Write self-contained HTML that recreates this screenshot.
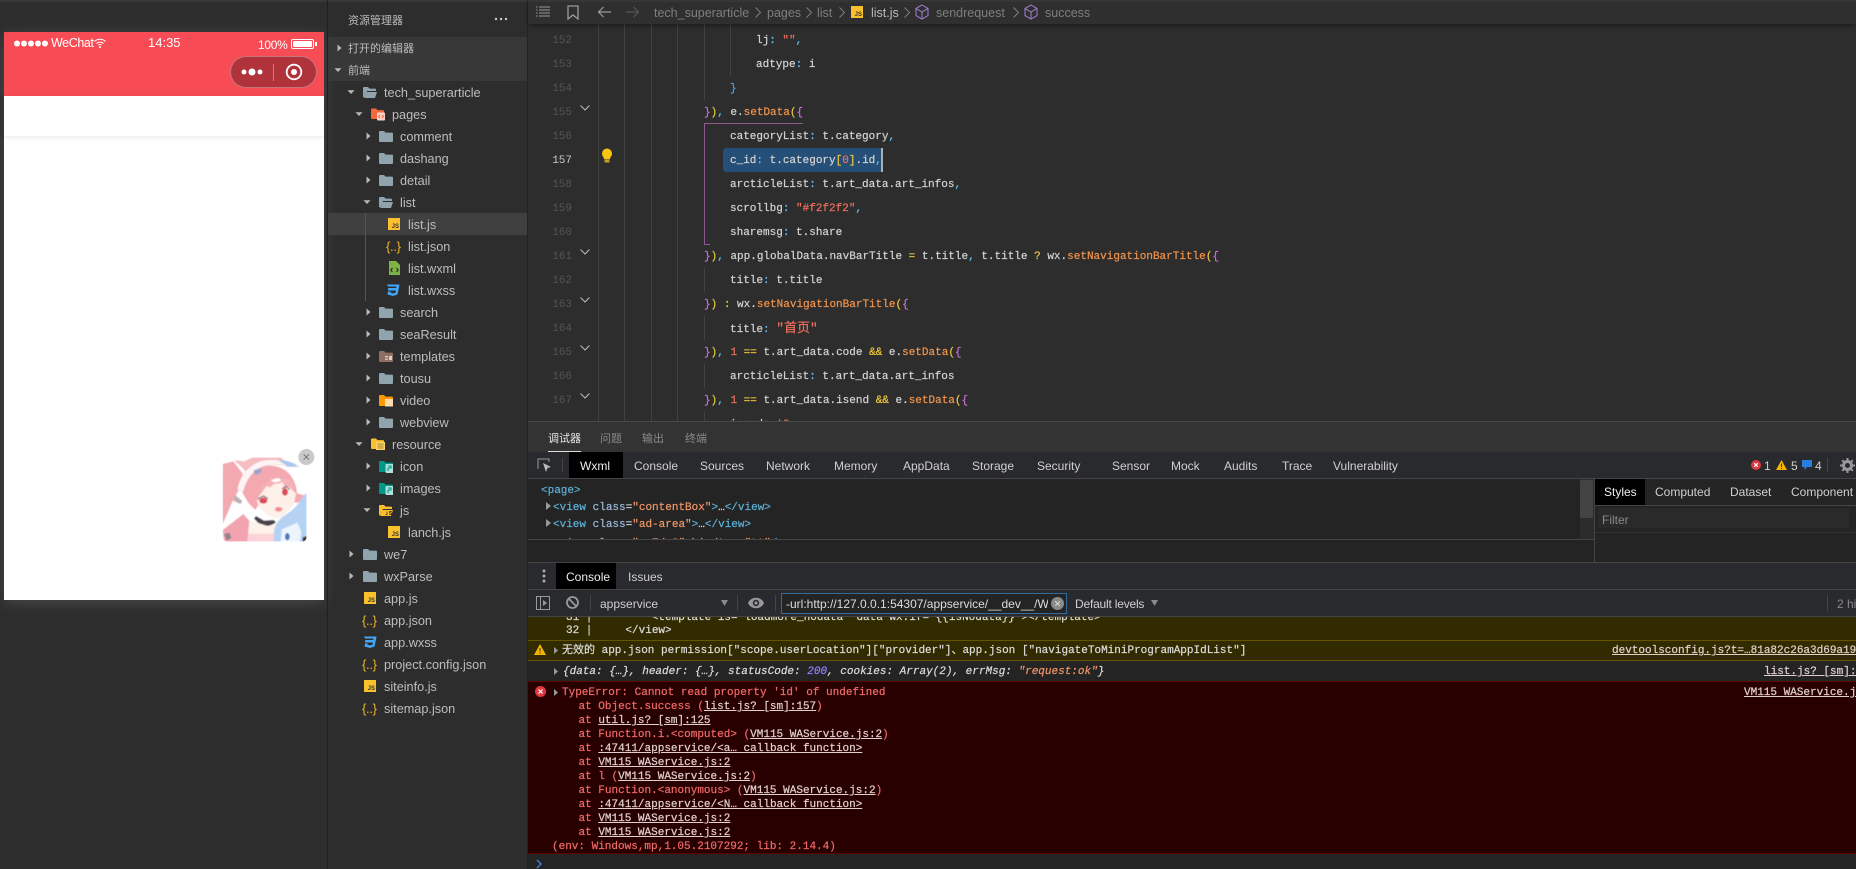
<!DOCTYPE html>
<html lang="zh"><head><meta charset="utf-8"><title>IDE</title>
<style>
html,body{margin:0;padding:0;width:1856px;height:869px;overflow:hidden;background:#2d2d2d}
body{position:relative;font-family:"Liberation Sans","Noto Sans CJK SC",sans-serif;font-size:12px;color:#ccc}
div,span.a,svg.a{position:absolute}
.s{position:absolute;height:22px;line-height:22px;font-size:12.7px;color:#bdbdbd;white-space:pre;margin-top:1px}
.ar{position:absolute;width:8px;height:8px}
.ic{position:absolute;width:14px;height:14px}
.js{position:absolute;width:12px;height:12px;background:#fbc02d;color:#333;font:bold 6px/6px "Liberation Sans",sans-serif;text-align:right;padding:0;overflow:hidden}
.js i{position:absolute;right:1px;bottom:0;font-style:normal}
.jn{position:absolute;color:#f0b429;font:13px/22px "Liberation Sans",sans-serif;letter-spacing:-.3px;white-space:pre;margin-top:1px}
.n{position:absolute;left:540px;width:32px;text-align:right;height:24px;font:11px/24px "Liberation Mono",monospace;color:#555;margin-top:1px}
.c{position:absolute;height:24px;font:11px/24px "Liberation Mono","Noto Sans CJK SC",monospace;color:#d4d4d4;white-space:pre;margin-top:1px;-webkit-text-stroke:.2px}
.g{position:absolute;width:1px;background:#424242}
.p{color:#5cc0f0}.o{color:#f0944d}.r{color:#f0705f}.y{color:#f0c93c}.m{color:#d070d8}.bl{color:#4aa5f0}
.t{position:absolute;font-size:12px;line-height:16px;white-space:pre;color:#d0d0d0;margin-top:1px}
.m2{position:absolute;font:11px/14px "Liberation Mono","Noto Sans CJK SC",monospace;white-space:pre;color:#ddd;margin-top:1px;-webkit-text-stroke:.2px}
.e{color:#f26a6a}.m2 u{color:#e2d0d0}
.tg{color:#5db0d7}.at{color:#9bbbdc}.vl{color:#f29766}
.cv{position:absolute;width:10px;height:6px}
.h{position:absolute;height:1px;background:#454545}
.sep{position:absolute;width:1px;background:#444}
.bc{position:absolute;top:7px;width:6px;height:11px}
</style></head><body>
<svg width="0" height="0" style="position:absolute"><defs>
<symbol id="rt" viewBox="0 0 8 8"><path d="M2.500 .5l4 3.500-4 3.500z" fill="#b9b9b9"/></symbol>
<symbol id="dn" viewBox="0 0 8 8"><path d="M.5 2.200h7L4 6z" fill="#b9b9b9"/></symbol>
<symbol id="fc" viewBox="0 0 14 14"><path d="M0 3a1 1 0 0 1 1-1h4l1.600 1.600H13a1 1 0 0 1 1 1V12a1 1 0 0 1-1 1H1a1 1 0 0 1-1-1z" fill="#90a4ae"/></symbol>
<symbol id="fo" viewBox="0 0 14 14"><path d="M0 3a1 1 0 0 1 1-1h4l1.600 1.600H12a1 1 0 0 1 1 1V6H4L1.500 12.500H1a1 1 0 0 1-1-1z" fill="#90a4ae"/><path d="M3.500 7H14l-2 6H1.500z" fill="#90a4ae"/></symbol>
<symbol id="cube" viewBox="0 0 14 16"><path d="M7 1l6 3.400v7.200L7 15l-6-3.400V4.400zM1 4.400L7 8l6-3.600M7 8v7" fill="none" stroke="#a07fd0" stroke-width="1"/></symbol>
<symbol id="css" viewBox="0 0 14 14"><path d="M1 1.500h12.500l-.5 3-1.500 7L7 13 1.500 11.500l.5-3h2.800l-.2 1.200 2.400.7 2.500-.7.400-2.200H1.800l.5-2.500h7.900l.3-1.500H2z" fill="#42a5f5"/></symbol>
<symbol id="chev" viewBox="0 0 6 11"><path d="M.5 .5l5 5-5 5" fill="none" stroke="#7e7e7e"/></symbol>
</defs></svg>

<!-- top strip -->
<div style="left:0;top:0;width:1856px;height:2px;background:#383838"></div>

<!-- phone -->
<div style="left:4px;top:32px;width:320px;height:568px;background:#fff;box-shadow:0 3px 14px rgba(255,255,255,.13)"></div>
<div style="left:4px;top:32px;width:320px;height:64px;background:#f74c55"></div>
<div style="left:4px;top:96px;width:320px;height:40px;background:#fff;box-shadow:0 1px 5px rgba(0,0,0,.1)"></div>
<svg class="a" style="left:14px;top:38px" width="36" height="10"><g fill="#fff"><circle cx="3" cy="5.500" r="3"/><circle cx="10" cy="5.500" r="3"/><circle cx="17" cy="5.500" r="3"/><circle cx="24" cy="5.500" r="3"/><circle cx="31" cy="5.500" r="3"/></g></svg>
<div class="t" style="left:51px;top:34px;color:#fff;font-size:12.5px;letter-spacing:-.4px">WeChat</div>
<svg class="a" style="left:94px;top:38px" width="12" height="10" viewBox="0 0 12 10"><path d="M.5 3.500a8 8 0 0 1 11 0M2.500 5.500a5 5 0 0 1 7 0M4.300 7.200a2.500 2.500 0 0 1 3.400 0" fill="none" stroke="#fff" stroke-width="1"/><circle cx="6" cy="9" r="1" fill="#fff"/></svg>
<div class="t" style="left:148px;top:34px;color:#fff;font-size:13px">14:35</div>
<div class="t" style="left:258px;top:36px;color:#fff;font-size:12px;letter-spacing:-.3px">100%</div>
<div style="left:291px;top:39px;width:21px;height:8px;border:1px solid #fff;border-radius:2px"></div>
<div style="left:293px;top:41px;width:19px;height:6px;background:#fff;border-radius:1px"></div>
<div style="left:315px;top:42px;width:2px;height:4px;background:#fff"></div>
<div style="left:230px;top:56px;width:85px;height:30px;border:1px solid rgba(255,255,255,.32);border-radius:16px;background:#b0333c"></div>
<svg class="a" style="left:240px;top:66px" width="24" height="12"><g fill="#fff"><circle cx="4" cy="6" r="2.500"/><circle cx="12" cy="6" r="3.500"/><circle cx="20" cy="6" r="2.500"/></g></svg>
<div style="left:273px;top:64px;width:1px;height:17px;background:rgba(255,255,255,.35)"></div>
<svg class="a" style="left:285px;top:63px" width="18" height="18"><circle cx="9" cy="9" r="7.300" fill="none" stroke="#fff" stroke-width="1.800"/><circle cx="9" cy="9" r="3" fill="#fff"/></svg>

<!-- floating image -->
<svg class="a" style="left:200px;top:430px" width="130" height="130" viewBox="0 0 390 390">
<defs><clipPath id="ck"><rect x="68" y="82" width="252" height="253" rx="14"/></clipPath><filter id="bl" x="-5%" y="-5%" width="110%" height="110%"><feGaussianBlur stdDeviation="1.500"/></filter></defs>
<g clip-path="url(#ck)" filter="url(#bl)">
<rect x="68" y="82" width="252" height="253" fill="#fff"/>
<!-- ponytail -->
<path d="M68 102l32-8 28 36-8 44-14 24 10 22-18-8-12 30-18 40z" fill="#f2a9b0"/>
<path d="M105 195l22 18-6 10-18-14z" fill="#b8b0b4"/>
<!-- hat top -->
<path d="M102 90l30 4 26-12h84l18 16-60 2-56 30z" fill="#f6bcc1"/>
<!-- hair mass -->
<path d="M128 190c0-55 45-90 95-82 42 6 66 42 68 82l29 8v12l-28 8-10 0-22-26-70 10-24 38-20-20z" fill="#f4a9b1"/>
<!-- visor -->
<path d="M112 178c6-36 30-68 62-82 34-12 80-8 122 14l-32 0c-30-10-62-10-88 6-24 14-38 38-46 68z" fill="#fff4f5" stroke="#e8b0b8" stroke-width="1"/>
<path d="M234 90c22 0 46 6 62 20l-32 0z" fill="#a8c8ec"/>
<path d="M160 122l22-8 4 12-20 10z" fill="#9ea2c8"/>
<!-- face -->
<path d="M170 208l30-40 50-12 38 34-6 34-34 36-22 6-30-16-22-26z" fill="#fdf0e9"/>
<!-- bangs -->
<path d="M186 170l40-28 44 8 16 32-14-6-8-20-8 26-8-26-20-2-16 18-14-4-14 18z" fill="#f6b3ba"/>
<path d="M212 150l24-6 8 8-20 6z" fill="#fff"/>
<ellipse cx="190" cy="212" rx="12" ry="9" fill="#d94e5c"/>
<ellipse cx="255" cy="186" rx="9" ry="11" fill="#d94e5c"/>
<path d="M172 208l18-10 14 8M246 176l14-7 8 10" stroke="#70404a" stroke-width="3" fill="none"/>
<ellipse cx="236" cy="238" rx="11" ry="7" fill="#ee8f90"/>
<!-- choker -->
<path d="M168 258l24 14 30-2 6 8-20 10-26-2-20-20z" fill="#4a4348"/>
<!-- chest -->
<path d="M140 272l26 4 36 12 24-6-4 53h-88z" fill="#fdf1ea"/>
<path d="M140 312h86v23h-86z" fill="#fbd3d8"/>
<!-- hoodie -->
<path d="M68 300l62-48 18 20-6 63H72z" fill="#f2a3b0"/>
<path d="M72 312l16-4 6 16-14 8z" fill="#8f8488"/>
<!-- blue hair -->
<path d="M222 335c-4-40 6-62 34-80 18-12 36-26 44-44l20-24v148z" fill="#b5d2f4"/>
<path d="M246 298l46-20 12 28-4 29h-58z" fill="#eef4fc"/>
<ellipse cx="262" cy="320" rx="7" ry="11" fill="#4a77c2"/>
<path d="M308 322l12-4v17h-12z" fill="#3a3a3a"/>
</g>
<circle cx="319" cy="81" r="24" fill="#c9c9c9"/><path d="M311 73l16 16M327 73l-16 16" stroke="#6a6a6a" stroke-width="2.500"/>
</svg>

<!-- sidebar -->
<div style="left:327px;top:0;width:1px;height:869px;background:#1f1f1f"></div>
<div style="left:328px;top:37px;width:199px;height:44px;background:#383838"></div>
<div style="left:328px;top:213px;width:199px;height:22px;background:#404040"></div>
<div style="left:527px;top:0;width:1px;height:869px;background:#232323"></div>
<div class="s" style="left:348px;top:9px;font-size:11px;color:#bbb">资源管理器</div>
<svg class="a" style="left:494px;top:17px" width="14" height="4"><g fill="#ccc"><circle cx="2" cy="2" r="1.200"/><circle cx="7" cy="2" r="1.200"/><circle cx="12" cy="2" r="1.200"/></g></svg>
<div class="s" style="left:348px;top:37px;font-size:11px">打开的编辑器</div>
<div class="s" style="left:348px;top:59px;font-size:11px">前端</div>
<svg class="ar" style="left:335px;top:44px"><use href="#rt"/></svg>
<svg class="ar" style="left:334px;top:66px"><use href="#dn"/></svg>
<div class="g" style="left:365px;top:213px;height:88px;background:#555"></div>

<svg class="ar" style="left:347px;top:88px"><use href="#dn"/></svg><svg class="ic" style="left:363px;top:85px"><use href="#fo"/></svg><div class="s" style="left:384px;top:81px">tech_superarticle</div>
<svg class="ar" style="left:355px;top:110px"><use href="#dn"/></svg>
<svg class="ic" style="left:371px;top:107px" viewBox="0 0 14 14"><path d="M0 2.500a1 1 0 0 1 1-1h4l1.600 1.600H12a1 1 0 0 1 1 1V11a1 1 0 0 1-1 1H1a1 1 0 0 1-1-1z" fill="#f4683c"/><rect x="6" y="5.500" width="8" height="8" rx="1" fill="#fbd3c5"/><path d="M9 8l-1.500 1.500L9 11M11 8l1.500 1.500L11 11" stroke="#f4683c" fill="none"/></svg>
<div class="s" style="left:392px;top:103px">pages</div>
<svg class="ar" style="left:364px;top:132px"><use href="#rt"/></svg><svg class="ic" style="left:379px;top:129px"><use href="#fc"/></svg><div class="s" style="left:400px;top:125px">comment</div>
<svg class="ar" style="left:364px;top:154px"><use href="#rt"/></svg><svg class="ic" style="left:379px;top:151px"><use href="#fc"/></svg><div class="s" style="left:400px;top:147px">dashang</div>
<svg class="ar" style="left:364px;top:176px"><use href="#rt"/></svg><svg class="ic" style="left:379px;top:173px"><use href="#fc"/></svg><div class="s" style="left:400px;top:169px">detail</div>
<svg class="ar" style="left:363px;top:198px"><use href="#dn"/></svg><svg class="ic" style="left:379px;top:195px"><use href="#fo"/></svg><div class="s" style="left:400px;top:191px">list</div>

<div class="js" style="left:388px;top:218px"><i>JS</i></div><div class="s" style="left:408px;top:213px">list.js</div>
<div class="jn" style="left:386px;top:235px">{..}</div><div class="s" style="left:408px;top:235px">list.json</div>
<svg class="ic" style="left:387px;top:261px" viewBox="0 0 14 14"><path d="M2 0h7l4 4v10H2z" fill="#7cb342"/><path d="M5.500 7L3.800 9l1.700 2M9.500 7l1.700 2-1.700 2" stroke="#2d2d2d" fill="none" stroke-width="1.200"/></svg><div class="s" style="left:408px;top:257px">list.wxml</div>
<svg class="ic" style="left:386px;top:283px"><use href="#css"/></svg><div class="s" style="left:408px;top:279px">list.wxss</div>

<svg class="ar" style="left:364px;top:308px"><use href="#rt"/></svg><svg class="ic" style="left:379px;top:305px"><use href="#fc"/></svg><div class="s" style="left:400px;top:301px">search</div>
<svg class="ar" style="left:364px;top:330px"><use href="#rt"/></svg><svg class="ic" style="left:379px;top:327px"><use href="#fc"/></svg><div class="s" style="left:400px;top:323px">seaResult</div>
<svg class="ar" style="left:364px;top:352px"><use href="#rt"/></svg>
<svg class="ic" style="left:379px;top:349px" viewBox="0 0 14 14"><path d="M0 3a1 1 0 0 1 1-1h4l1.600 1.600H13a1 1 0 0 1 1 1V12a1 1 0 0 1-1 1H1a1 1 0 0 1-1-1z" fill="#8d6e63"/><path d="M6 7h3v1.200H6zM6 9.500h3v1.200H6zM10 7h3v4h-3z" fill="#e0d0c8"/></svg>
<div class="s" style="left:400px;top:345px">templates</div>
<svg class="ar" style="left:364px;top:374px"><use href="#rt"/></svg><svg class="ic" style="left:379px;top:371px"><use href="#fc"/></svg><div class="s" style="left:400px;top:367px">tousu</div>
<svg class="ar" style="left:364px;top:396px"><use href="#rt"/></svg>
<svg class="ic" style="left:379px;top:393px" viewBox="0 0 14 14"><path d="M0 3a1 1 0 0 1 1-1h4l1.600 1.600H13a1 1 0 0 1 1 1V12a1 1 0 0 1-1 1H1a1 1 0 0 1-1-1z" fill="#ff9800"/><rect x="6" y="6" width="8.500" height="7.500" fill="#fbdcae"/></svg>
<div class="s" style="left:400px;top:389px">video</div>
<svg class="ar" style="left:364px;top:418px"><use href="#rt"/></svg><svg class="ic" style="left:379px;top:415px"><use href="#fc"/></svg><div class="s" style="left:400px;top:411px">webview</div>
<svg class="ar" style="left:355px;top:440px"><use href="#dn"/></svg>
<svg class="ic" style="left:371px;top:437px" viewBox="0 0 14 14"><path d="M0 2.500a1 1 0 0 1 1-1h4l1.600 1.600H12a1 1 0 0 1 1 1V11a1 1 0 0 1-1 1H1a1 1 0 0 1-1-1z" fill="#fbc02d"/><rect x="5" y="5" width="9" height="8" fill="#fbd56a"/><path d="M6.500 7h6M6.500 9h6M6.500 11h6" stroke="#a5862a"/></svg>
<div class="s" style="left:392px;top:433px">resource</div>
<svg class="ar" style="left:364px;top:462px"><use href="#rt"/></svg>
<svg class="ic" style="left:379px;top:459px" viewBox="0 0 14 14"><path d="M0 3a1 1 0 0 1 1-1h4l1.600 1.600H13a1 1 0 0 1 1 1V12a1 1 0 0 1-1 1H1a1 1 0 0 1-1-1z" fill="#009688"/><rect x="6.500" y="5" width="8" height="9" rx="1" fill="#b2dfdb"/><path d="M9 7h3v2h-3v3" stroke="#009688" fill="none"/></svg>
<div class="s" style="left:400px;top:455px">icon</div>
<svg class="ar" style="left:364px;top:484px"><use href="#rt"/></svg>
<svg class="ic" style="left:379px;top:481px" viewBox="0 0 14 14"><path d="M0 3a1 1 0 0 1 1-1h4l1.600 1.600H13a1 1 0 0 1 1 1V12a1 1 0 0 1-1 1H1a1 1 0 0 1-1-1z" fill="#009688"/><rect x="6.500" y="5" width="8" height="9" rx="1" fill="#b2dfdb"/><path d="M9 7h3v2h-3v3" stroke="#009688" fill="none"/></svg>
<div class="s" style="left:400px;top:477px">images</div>
<svg class="ar" style="left:363px;top:506px"><use href="#dn"/></svg>
<svg class="ic" style="left:379px;top:503px" viewBox="0 0 14 14"><path d="M0 3a1 1 0 0 1 1-1h4l1.600 1.600H12a1 1 0 0 1 1 1V6H4l-2.500 6.500H1a1 1 0 0 1-1-1z" fill="#fbc02d"/><path d="M3.500 7H14l-2 6H1.500z" fill="#fbc02d"/><path d="M8 8.500v3l-1.500.5M13 8.500h-2.500v1.500h2v1.500h-2.500" stroke="#333" fill="none" stroke-width=".8"/></svg>
<div class="s" style="left:400px;top:499px">js</div>
<div class="js" style="left:388px;top:526px"><i>JS</i></div><div class="s" style="left:408px;top:521px">lanch.js</div>
<svg class="ar" style="left:347px;top:550px"><use href="#rt"/></svg><svg class="ic" style="left:363px;top:547px"><use href="#fc"/></svg><div class="s" style="left:384px;top:543px">we7</div>
<svg class="ar" style="left:347px;top:572px"><use href="#rt"/></svg><svg class="ic" style="left:363px;top:569px"><use href="#fc"/></svg><div class="s" style="left:384px;top:565px">wxParse</div>
<div class="js" style="left:364px;top:592px"><i>JS</i></div><div class="s" style="left:384px;top:587px">app.js</div>
<div class="jn" style="left:362px;top:609px">{..}</div><div class="s" style="left:384px;top:609px">app.json</div>
<svg class="ic" style="left:363px;top:635px"><use href="#css"/></svg><div class="s" style="left:384px;top:631px">app.wxss</div>
<div class="jn" style="left:362px;top:653px">{..}</div><div class="s" style="left:384px;top:653px">project.config.json</div>
<div class="js" style="left:364px;top:680px"><i>JS</i></div><div class="s" style="left:384px;top:675px">siteinfo.js</div>
<div class="jn" style="left:362px;top:697px">{..}</div><div class="s" style="left:384px;top:697px">sitemap.json</div>

<!-- breadcrumb -->
<div style="left:528px;top:2px;width:1328px;height:22px;background:#2f2f2f;box-shadow:0 2px 4px rgba(0,0,0,.35);z-index:3"></div>
<div style="left:528px;top:0;width:1328px;height:24px;z-index:4">
<svg class="a" style="left:8px;top:6px" width="14" height="12"><path d="M0 1h1.500M3 1h11M0 4h1.500M3 4h11M0 7h1.500M3 7h11M0 10h1.500M3 10h11" stroke="#9a9a9a"/></svg>
<svg class="a" style="left:39px;top:5px" width="12" height="15"><path d="M1 1h10v13L6 10l-5 4z" fill="none" stroke="#9a9a9a" stroke-width="1.300"/></svg>
<svg class="a" style="left:69px;top:6px" width="14" height="12"><path d="M14 6H1.500M6.500 1L1.500 6l5 5" fill="none" stroke="#9a9a9a" stroke-width="1.200"/></svg>
<svg class="a" style="left:98px;top:6px" width="14" height="12"><path d="M0 6h12.500M7.500 1l5 5-5 5" fill="none" stroke="#555" stroke-width="1.200"/></svg>
<div class="t" style="left:126px;top:4px;font-size:12.500px;color:#7e7e7e">tech_superarticle</div>
<svg class="bc" style="left:227px"><use href="#chev"/></svg>
<div class="t" style="left:239px;top:4px;font-size:12.500px;color:#7e7e7e">pages</div>
<svg class="bc" style="left:278px"><use href="#chev"/></svg>
<div class="t" style="left:289px;top:4px;font-size:12.500px;color:#7e7e7e">list</div>
<svg class="bc" style="left:311px"><use href="#chev"/></svg>
<div class="js" style="left:323px;top:6px"><i>JS</i></div>
<div class="t" style="left:343px;top:4px;font-size:12.500px;color:#bbb">list.js</div>
<svg class="bc" style="left:376px"><use href="#chev"/></svg>
<svg class="a" style="left:387px;top:4px" width="14" height="16"><use href="#cube"/></svg>
<div class="t" style="left:408px;top:4px;font-size:12.500px;color:#7e7e7e">sendrequest</div>
<svg class="bc" style="left:485px"><use href="#chev"/></svg>
<svg class="a" style="left:496px;top:4px" width="14" height="16"><use href="#cube"/></svg>
<div class="t" style="left:517px;top:4px;font-size:12.500px;color:#7e7e7e">success</div>
</div>

<!-- indent guides -->
<div class="g" style="left:598px;top:24px;height:398px"></div>
<div class="g" style="left:624px;top:24px;height:398px"></div>
<div class="g" style="left:651px;top:24px;height:398px"></div>
<div class="g" style="left:677px;top:24px;height:398px"></div>
<div class="g" style="left:704px;top:24px;height:76px"></div>
<div class="g" style="left:730px;top:24px;height:52px"></div>
<div class="g" style="left:704px;top:268px;height:24px"></div>
<div class="g" style="left:704px;top:316px;height:24px"></div>
<div class="g" style="left:704px;top:364px;height:24px"></div>
<div class="g" style="left:704px;top:412px;height:10px"></div>
<div style="left:704px;top:123px;width:1px;height:121px;background:#8a5a90"></div>
<div style="left:704px;top:123px;width:99px;height:1px;background:#8a5a90"></div>
<div style="left:704px;top:244px;width:6px;height:1px;background:#8a5a90"></div>

<!-- line numbers -->
<div class="n" style="top:28px">152</div><div class="n" style="top:52px">153</div><div class="n" style="top:76px">154</div><div class="n" style="top:100px">155</div><div class="n" style="top:124px">156</div><div class="n" style="top:148px;color:#c8c8c8">157</div><div class="n" style="top:172px">158</div><div class="n" style="top:196px">159</div><div class="n" style="top:220px">160</div><div class="n" style="top:244px">161</div><div class="n" style="top:268px">162</div><div class="n" style="top:292px">163</div><div class="n" style="top:316px">164</div><div class="n" style="top:340px">165</div><div class="n" style="top:364px">166</div><div class="n" style="top:388px">167</div>
<svg class="cv" style="left:580px;top:105px"><path d="M.5 .5L5 5l4.500-4.500" fill="none" stroke="#bbb"/></svg>
<svg class="cv" style="left:580px;top:249px"><path d="M.5 .5L5 5l4.500-4.500" fill="none" stroke="#bbb"/></svg>
<svg class="cv" style="left:580px;top:297px"><path d="M.5 .5L5 5l4.500-4.500" fill="none" stroke="#bbb"/></svg>
<svg class="cv" style="left:580px;top:345px"><path d="M.5 .5L5 5l4.500-4.500" fill="none" stroke="#bbb"/></svg>
<svg class="cv" style="left:580px;top:393px"><path d="M.5 .5L5 5l4.500-4.500" fill="none" stroke="#bbb"/></svg>
<svg class="a" style="left:601px;top:148px" width="12" height="15" viewBox="0 0 12 15"><path d="M6 .5a5 5 0 0 1 5 5c0 2.500-2 4-2.300 6H3.300C3 9.500 1 8 1 5.500a5 5 0 0 1 5-5z" fill="#f9c513"/><path d="M3.600 12h4.800v2.500H3.600z" fill="#c9a21f"/></svg>

<!-- selection -->
<div style="left:723px;top:148px;width:158px;height:24px;background:#264f78;border-radius:3px 0 0 3px"></div>
<div style="left:881px;top:148px;width:2px;height:24px;background:#aeafad"></div>

<!-- code -->
<div class="c" style="left:756px;top:28px">lj<span class="p">:</span> <span class="r">""</span><span class="p">,</span></div>
<div class="c" style="left:756px;top:52px">adtype<span class="p">:</span> i</div>
<div class="c" style="left:730px;top:76px"><span class="bl">}</span></div>
<div class="c" style="left:704px;top:100px"><span class="m">}</span><span class="y">)</span><span class="p">,</span> e.<span class="o">setData</span><span class="y">(</span><span class="m">{</span></div>
<div class="c" style="left:730px;top:124px">categoryList<span class="p">:</span> t.category<span class="p">,</span></div>
<div class="c" style="left:730px;top:148px">c_id<span class="p">:</span> t.category<span class="y">[</span><span class="r">0</span><span class="y">]</span>.id<span class="p">,</span></div>
<div class="c" style="left:730px;top:172px">arcticleList<span class="p">:</span> t.art_data.art_infos<span class="p">,</span></div>
<div class="c" style="left:730px;top:196px">scrollbg<span class="p">:</span> <span class="r">"#f2f2f2"</span><span class="p">,</span></div>
<div class="c" style="left:730px;top:220px">sharemsg<span class="p">:</span> t.share</div>
<div class="c" style="left:704px;top:244px"><span class="m">}</span><span class="y">)</span><span class="p">,</span> app.globalData.navBarTitle <span class="y">=</span> t.title<span class="p">,</span> t.title <span class="y">?</span> wx.<span class="o">setNavigationBarTitle</span><span class="y">(</span><span class="m">{</span></div>
<div class="c" style="left:730px;top:268px">title<span class="p">:</span> t.title</div>
<div class="c" style="left:704px;top:292px"><span class="m">}</span><span class="y">)</span> <span class="y">:</span> wx.<span class="o">setNavigationBarTitle</span><span class="y">(</span><span class="m">{</span></div>
<div class="c" style="left:730px;top:316px">title<span class="p">:</span> <span class="r" style="font-size:13px">"首页"</span></div>
<div class="c" style="left:704px;top:340px"><span class="m">}</span><span class="y">)</span><span class="p">,</span> <span class="r">1</span> <span class="y">==</span> t.art_data.code <span class="y">&amp;&amp;</span> e.<span class="o">setData</span><span class="y">(</span><span class="m">{</span></div>
<div class="c" style="left:730px;top:364px">arcticleList<span class="p">:</span> t.art_data.art_infos</div>
<div class="c" style="left:704px;top:388px"><span class="m">}</span><span class="y">)</span><span class="p">,</span> <span class="r">1</span> <span class="y">==</span> t.art_data.isend <span class="y">&amp;&amp;</span> e.<span class="o">setData</span><span class="y">(</span><span class="m">{</span></div>
<div class="c" style="left:730px;top:412px">isend<span class="p">:</span> <span class="r">!0</span></div>

<!-- panel -->
<div style="left:528px;top:421px;width:1328px;height:448px;background:#333;border-top:1px solid #4a4a4a;box-sizing:border-box"></div>
<div class="t" style="left:548px;top:430px;color:#e8e8e8;font-size:11px">调试器</div>
<div class="t" style="left:600px;top:430px;color:#8a8a8a;font-size:11px">问题</div>
<div class="t" style="left:642px;top:430px;color:#8a8a8a;font-size:11px">输出</div>
<div class="t" style="left:685px;top:430px;color:#8a8a8a;font-size:11px">终端</div>
<div style="left:548px;top:451px;width:33px;height:1px;background:#ddd"></div>

<!-- devtools tabs -->
<div style="left:528px;top:452px;width:1328px;height:26px;background:#292a2d"></div>
<div class="h" style="left:528px;top:478px;width:1328px"></div>
<svg class="a" style="left:537px;top:458px" width="16" height="16"><path d="M1 11V1h11v3" fill="none" stroke="#999"/><path d="M6 5l8 4-3.500 1L9 14z" fill="#bbb"/></svg>
<div class="sep" style="left:562px;top:458px;height:14px"></div>
<div style="left:569px;top:452px;width:54px;height:26px;background:#000"></div>
<div class="t" style="left:580px;top:457px;color:#eee">Wxml</div>
<div class="t" style="left:634px;top:457px">Console</div>
<div class="t" style="left:700px;top:457px">Sources</div>
<div class="t" style="left:766px;top:457px">Network</div>
<div class="t" style="left:834px;top:457px">Memory</div>
<div class="t" style="left:903px;top:457px">AppData</div>
<div class="t" style="left:972px;top:457px">Storage</div>
<div class="t" style="left:1037px;top:457px">Security</div>
<div class="t" style="left:1112px;top:457px">Sensor</div>
<div class="t" style="left:1171px;top:457px">Mock</div>
<div class="t" style="left:1224px;top:457px">Audits</div>
<div class="t" style="left:1282px;top:457px">Trace</div>
<div class="t" style="left:1333px;top:457px">Vulnerability</div>
<svg class="a" style="left:1751px;top:460px" width="10" height="10"><circle cx="5" cy="5" r="5" fill="#e0383e"/><path d="M3.200 3.200l3.600 3.600M6.800 3.200L3.200 6.800" stroke="#fff" stroke-width="1.200"/></svg>
<div class="t" style="left:1764px;top:457px">1</div>
<svg class="a" style="left:1776px;top:460px" width="11" height="10"><path d="M5.500 0L11 10H0z" fill="#f4b400"/><path d="M5.500 3.500v3.500M5.500 8v1" stroke="#333"/></svg>
<div class="t" style="left:1791px;top:457px">5</div>
<svg class="a" style="left:1802px;top:460px" width="10" height="10"><path d="M0 0h10v7H5L2.500 10V7H0z" fill="#2a7de1"/></svg>
<div class="t" style="left:1815px;top:457px">4</div>
<div class="sep" style="left:1827px;top:458px;height:14px"></div>
<svg class="a" style="left:1840px;top:458px" width="15" height="15" viewBox="0 0 15 15"><circle cx="7.500" cy="7.500" r="4" fill="none" stroke="#9a9a9a" stroke-width="3"/><path d="M7.500 0v3M7.500 12v3M0 7.500h3M12 7.500h3M2.200 2.200l2 2M10.800 10.800l2 2M12.800 2.200l-2 2M4.200 10.800l-2 2" stroke="#9a9a9a" stroke-width="2"/></svg>

<!-- elements -->
<div style="left:528px;top:479px;width:1066px;height:83px;background:#242424"></div>
<div style="left:528px;top:479px;width:1066px;height:60px;overflow:hidden">
<div class="m2" style="left:13px;top:4px"><span class="tg">&lt;page&gt;</span></div>
<div class="m2" style="left:25px;top:21px"><span class="tg">&lt;view</span> <span class="at">class</span>=<span class="vl">"contentBox"</span><span class="tg">&gt;</span>…<span class="tg">&lt;/view&gt;</span></div>
<div class="m2" style="left:25px;top:38px"><span class="tg">&lt;view</span> <span class="at">class</span>=<span class="vl">"ad-area"</span><span class="tg">&gt;</span>…<span class="tg">&lt;/view&gt;</span></div>
<div class="m2" style="left:25px;top:57px"><span class="tg">&lt;view</span> <span class="at">class</span>=<span class="vl">"a-7de8"</span> <span class="at">bindtap</span>=<span class="vl">"tt"</span><span class="tg">/&gt;</span></div>
<svg class="ar" style="left:18px;top:22px;width:6px;height:10px" viewBox="0 0 6 10"><path d="M0 1l5 4-5 4z" fill="#9a9a9a"/></svg>
<svg class="ar" style="left:18px;top:39px;width:6px;height:10px" viewBox="0 0 6 10"><path d="M0 1l5 4-5 4z" fill="#9a9a9a"/></svg>
</div>
<div style="left:1580px;top:479px;width:14px;height:60px;background:#2c2c2c"></div>
<div style="left:1580px;top:480px;width:13px;height:38px;background:#444;border-radius:2px"></div>
<div class="h" style="left:528px;top:539px;width:1066px"></div>
<div class="h" style="left:528px;top:562px;width:1328px"></div>
<div class="sep" style="left:1594px;top:479px;height:84px"></div>
<div style="left:1595px;top:479px;width:261px;height:83px;background:#242424"></div>
<div style="left:1595px;top:479px;width:50px;height:26px;background:#000"></div>
<div class="t" style="left:1604px;top:483px;color:#eee">Styles</div>
<div class="t" style="left:1655px;top:483px">Computed</div>
<div class="t" style="left:1730px;top:483px">Dataset</div>
<div class="t" style="left:1791px;top:483px">Component</div>
<div class="h" style="left:1595px;top:505px;width:261px"></div>
<div style="left:1598px;top:508px;width:251px;height:20px;background:#2a2a2a"></div>
<div class="t" style="left:1602px;top:511px;color:#8a8a8a">Filter</div>
<div class="h" style="left:1595px;top:532px;width:261px;background:#333"></div>

<!-- console drawer -->
<div style="left:528px;top:563px;width:1328px;height:26px;background:#292a2d"></div>
<div class="h" style="left:528px;top:589px;width:1328px"></div>
<svg class="a" style="left:542px;top:569px" width="4" height="14"><g fill="#aaa"><circle cx="2" cy="2" r="1.500"/><circle cx="2" cy="7" r="1.500"/><circle cx="2" cy="12" r="1.500"/></g></svg>
<div style="left:556px;top:563px;width:60px;height:26px;background:#000"></div>
<div class="t" style="left:566px;top:568px;color:#eee">Console</div>
<div class="t" style="left:628px;top:568px">Issues</div>

<!-- messages first so toolbar clips -->
<div style="left:528px;top:617px;width:1328px;height:23px;background:#332b00"></div>
<div class="m2" style="left:566px;top:610px">31 |         &lt;template is="loadmore_nodata" data wx:if="{{isNodata}}"&gt;&lt;/template&gt;</div>
<div class="m2" style="left:566px;top:623px">32 |     &lt;/view&gt;</div>
<div style="left:528px;top:640px;width:1328px;height:1px;background:#665500"></div>
<div style="left:528px;top:641px;width:1328px;height:19px;background:#332b00"></div>
<div style="left:528px;top:660px;width:1328px;height:1px;background:#665500"></div>
<svg class="a" style="left:534px;top:644px" width="12" height="11"><path d="M6 0l6 11H0z" fill="#f4b400"/><path d="M6 4v3.500M6 8.500v1.200" stroke="#333"/></svg>
<svg class="a" style="left:554px;top:646px" width="6" height="9"><path d="M0 1l4 3.500L0 8z" fill="#9a9a9a"/></svg>
<div class="m2" style="left:562px;top:643px">无效的 app.json permission["scope.userLocation"]["provider"]、app.json ["navigateToMiniProgramAppIdList"]</div>
<div class="m2" style="left:1612px;top:643px"><u>devtoolsconfig.js?t=…81a82c26a3d69a19</u></div>
<div style="left:528px;top:661px;width:1328px;height:20px;background:#242424"></div>
<svg class="a" style="left:554px;top:667px" width="6" height="9"><path d="M0 1l4 3.500L0 8z" fill="#9a9a9a"/></svg>
<div class="m2" style="left:563px;top:664px;font-style:italic">{data: {…}, header: {…}, statusCode: <span style="color:#9980ff">200</span>, cookies: Array(2), errMsg: <span class="vl">"request:ok"</span>}</div>
<div class="m2" style="left:1764px;top:664px"><u>list.js? [sm]:157</u></div>
<div style="left:528px;top:681px;width:1328px;height:173px;background:#290000;border-top:1px solid #5c0000;border-bottom:1px solid #5c0000;box-sizing:border-box"></div>
<svg class="a" style="left:535px;top:686px" width="11" height="11"><circle cx="5.500" cy="5.500" r="5.500" fill="#e0383e"/><path d="M3.500 3.500l4 4M7.500 3.500l-4 4" stroke="#fff" stroke-width="1.200"/></svg>
<svg class="a" style="left:554px;top:688px" width="6" height="9"><path d="M0 1l4 3.500L0 8z" fill="#9a9a9a"/></svg>
<div class="m2 e" style="left:562px;top:685px">TypeError: Cannot read property 'id' of undefined</div>
<div class="m2" style="left:1744px;top:685px"><u>VM115 WAService.js:2</u></div>
<div class="m2 e" style="left:578.500px;top:699px">at Object.success (<u>list.js? [sm]:157</u>)</div>
<div class="m2 e" style="left:578.500px;top:713px">at <u>util.js? [sm]:125</u></div>
<div class="m2 e" style="left:578.500px;top:727px">at Function.i.&lt;computed&gt; (<u>VM115 WAService.js:2</u>)</div>
<div class="m2 e" style="left:578.500px;top:741px">at <u>:47411/appservice/&lt;a… callback function&gt;</u></div>
<div class="m2 e" style="left:578.500px;top:755px">at <u>VM115 WAService.js:2</u></div>
<div class="m2 e" style="left:578.500px;top:769px">at l (<u>VM115 WAService.js:2</u>)</div>
<div class="m2 e" style="left:578.500px;top:783px">at Function.&lt;anonymous&gt; (<u>VM115 WAService.js:2</u>)</div>
<div class="m2 e" style="left:578.500px;top:797px">at <u>:47411/appservice/&lt;N… callback function&gt;</u></div>
<div class="m2 e" style="left:578.500px;top:811px">at <u>VM115 WAService.js:2</u></div>
<div class="m2 e" style="left:578.500px;top:825px">at <u>VM115 WAService.js:2</u></div>
<div class="m2 e" style="left:552px;top:839px">(env: Windows,mp,1.05.2107292; lib: 2.14.4)</div>
<div style="left:528px;top:854px;width:1328px;height:15px;background:#242424"></div>
<svg class="a" style="left:536px;top:859px" width="7" height="10"><path d="M1 1l4 4-4 4" fill="none" stroke="#3d7fe0" stroke-width="1.500"/></svg>

<!-- console toolbar -->
<div style="left:528px;top:590px;width:1328px;height:26px;background:#292a2d"></div>
<div class="h" style="left:528px;top:616px;width:1328px"></div>
<svg class="a" style="left:536px;top:596px" width="14" height="14"><rect x=".5" y=".5" width="13" height="13" fill="none" stroke="#999"/><path d="M4.500 1v12" stroke="#999"/><path d="M7 4l4 3-4 3z" fill="#999"/></svg>
<svg class="a" style="left:566px;top:596px" width="13" height="13"><circle cx="6.500" cy="6.500" r="5.500" fill="none" stroke="#999" stroke-width="1.800"/><path d="M2.800 2.800l7.400 7.400" stroke="#999" stroke-width="1.800"/></svg>
<div class="sep" style="left:590px;top:595px;height:16px"></div>
<div class="t" style="left:600px;top:595px;font-size:12px">appservice</div>
<svg class="a" style="left:721px;top:600px" width="7" height="6"><path d="M0 0h7L3.500 6z" fill="#8a8a8a"/></svg>
<div class="sep" style="left:737px;top:595px;height:16px"></div>
<svg class="a" style="left:748px;top:597px" width="16" height="12"><path d="M0 6c3-7 13-7 16 0-3 7-13 7-16 0z" fill="#999"/><circle cx="8" cy="6" r="3.200" fill="#292a2d"/><circle cx="8" cy="6" r="1.600" fill="#999"/></svg>
<div class="sep" style="left:775px;top:595px;height:16px"></div>
<div style="left:781px;top:593px;width:286px;height:21px;border:1px solid #2f6c9e;box-sizing:border-box;background:#242424;overflow:hidden">
<div class="t" style="left:4px;top:1px;width:262px;overflow:hidden;font-size:12px;color:#ddd">-url:http://127.0.0.1:54307/appservice/__dev__/WAService.js</div>
<svg class="a" style="left:269px;top:3px" width="13" height="13"><circle cx="6.500" cy="6.500" r="6.500" fill="#8a8a8a"/><path d="M4.200 4.200l4.600 4.600M8.800 4.200l-4.600 4.600" stroke="#ddd"/></svg>
</div>
<div class="t" style="left:1075px;top:595px;letter-spacing:-.2px">Default levels</div>
<svg class="a" style="left:1151px;top:600px" width="7" height="6"><path d="M0 0h7L3.500 6z" fill="#8a8a8a"/></svg>
<div class="sep" style="left:1827px;top:595px;height:16px"></div>
<div class="t" style="left:1837px;top:595px;color:#8a8a8a">2 hidden</div>
</body></html>
